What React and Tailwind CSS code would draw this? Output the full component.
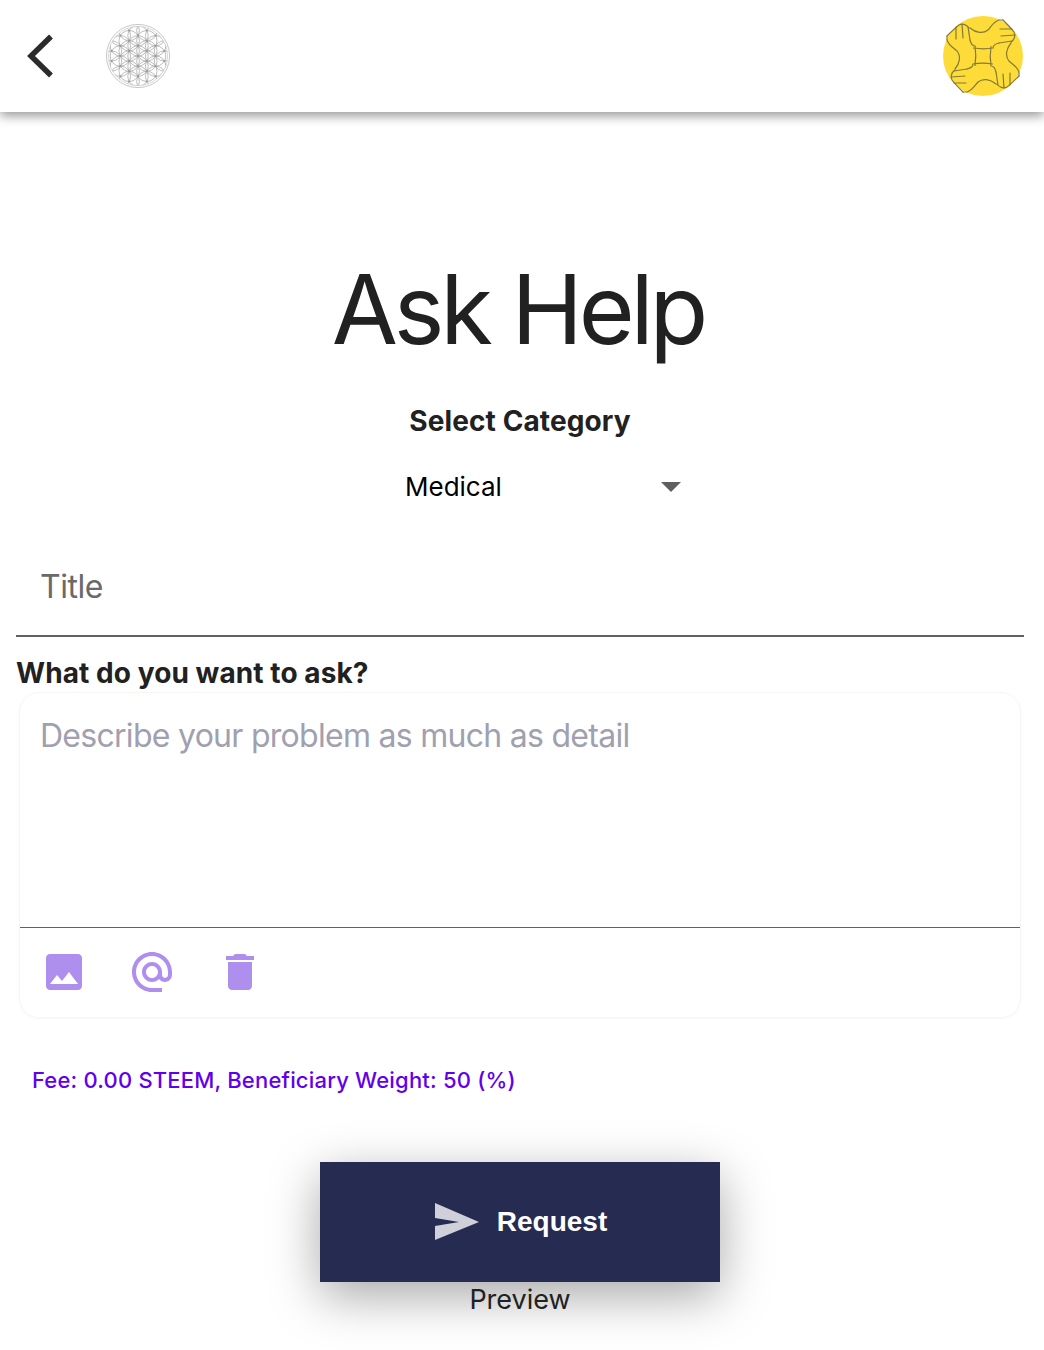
import React from "react";

const Flower = () => {
    // every lattice point gets a circle, the outer ring clips them
    const s = 10.2;
    const pts = [];
    for (let col = -4; col <= 4; col++) {
        for (let row = -4; row <= 4; row++) {
            const x = col * s * 0.866;
            const y = (row + (Math.abs(col) % 2 ? 0.5 : 0)) * s;
            if (Math.hypot(x, y) <= s * 2.9) pts.push([x, y]);
        }
    }
    return (
        <svg width="66" height="66" viewBox="-33 -33 66 66" fill="none" stroke="#a8a8a8" strokeWidth="0.75">
            <circle r="31.6" stroke="#c8c8c8" strokeWidth="1" />
            <circle r="29.6" stroke="#c8c8c8" strokeWidth="0.7" />
            <clipPath id="flower-clip">
                <circle r="29.6" />
            </clipPath>
            <g clipPath="url(#flower-clip)">
                {pts.map(([x, y], i) => (
                    <circle key={i} cx={x} cy={y} r={s} />
                ))}
                {pts.map(([x, y], i) => (
                    <circle key={"dot" + i} cx={x} cy={y} r="1.1" fill="#9a9a9a" stroke="none" />
                ))}
            </g>
        </svg>
    );
};

// one hand, repeated four times around the centre
const Hand = ({ angle }) => (
    <g transform={`rotate(${angle} 40 40)`}>
        <path d="M27 12 C33 17 40 18 45 14 C48 11 50 6 56 4 L60 4" />
        <path d="M60 4 C64 8 68 12 71 16 C73 20 71 24 68 26" />
        <path d="M57 13 L69 13 M58 20 L72 19 M56 27 L69 25" />
        <path d="M30.500 32 C37 33 44 33 50 32 C50 30 52 28 56 27" />
    </g>
);

const Hands = () => (
    <svg width="80" height="80" viewBox="0 0 80 80" fill="none" stroke="#857a34" strokeWidth="1.2" strokeLinecap="round">
        <circle cx="40" cy="40" r="40" fill="#fddc3a" stroke="none" />
        <Hand angle={0} />
        <Hand angle={90} />
        <Hand angle={180} />
        <Hand angle={270} />
    </svg>
);

const App = () => {
    return (
        <div className="w-[1044px] h-[1350px] overflow-hidden bg-white font-['Inter',sans-serif] text-[#212121]">
            {/* Header */}
            <div className="h-[112px] px-4 flex items-center justify-between shadow-[0_4px_10px_rgba(0,0,0,0.4)]">
                <div className="flex items-center">
                    <svg width="48" height="48" viewBox="0 0 48 48" fill="none">
                        <path d="M33 6.500 L15 24 L33 41.500" stroke="#2b2b2b" strokeWidth="5.500" strokeLinecap="square" />
                    </svg>
                    <div className="ml-[41px]">
                        <Flower />
                    </div>
                </div>
                <div className="mr-[5px]">
                    <Hands />
                </div>
            </div>

            <div className="pl-4 pr-5">
                <h1 className="mt-[140px] h-[115px] pr-[4px] text-center text-[96px] leading-[115px] font-[380] tracking-[-4.2px]">Ask Help</h1>
                <div className="mt-[34px] text-center text-[28px] leading-[40px] font-bold tracking-[0.1px]">Select Category</div>

                {/* Select */}
                <div className="mt-[26px] ml-[389px] w-[280px] flex items-center justify-between">
                    <span className="text-[26px] leading-[40px] text-black">Medical</span>
                    <span className="w-0 h-0 mr-[4px] border-x-[10px] border-x-transparent border-t-[10px] border-t-[#5f5f5f]" />
                </div>

                {/* Title */}
                <div className="mt-[26px] h-[104px] border-b-[2px] border-[#616161] px-[24px] pt-[31px] text-[32px] leading-[46px] tracking-[-0.5px] text-[#6a6a6a]">Title</div>

                <div className="mt-[17px] text-[28px] leading-[38px] font-bold tracking-[0.08px]">What do you want to ask?</div>

                {/* Editor */}
                <div className="mx-[3px] h-[326px] rounded-[20px] border border-[#f6f6f6] shadow-[0_1px_3px_rgba(0,0,0,0.03)] flex flex-col">
                    <div className="h-[235px] border-b border-[#616161] px-[20px] pt-[18px] text-[32px] leading-[50px] tracking-[-0.72px] text-[#a0a0b0]">Describe your problem as much as detail</div>
                    <div className="flex items-center h-[88px] pl-[20px] gap-[40px] text-[#ae8fee]">
                        <svg width="48" height="48" viewBox="0 0 24 24" fill="currentColor">
                            <path d="M21 19V5c0-1.100-.9-2-2-2H5c-1.100 0-2 .9-2 2v14c0 1.100.9 2 2 2h14c1.100 0 2-.9 2-2zM8.500 13.500l2.500 3.010L14.500 12l4.500 6H5l3.500-4.500z" />
                        </svg>
                        <svg width="48" height="48" viewBox="0 0 24 24" fill="currentColor">
                            <path d="M12 2C6.480 2 2 6.480 2 12s4.480 10 10 10h5v-2h-5c-4.340 0-8-3.660-8-8s3.660-8 8-8 8 3.660 8 8v1.430c0 .79-.71 1.570-1.500 1.570s-1.500-.78-1.500-1.570V12c0-2.760-2.240-5-5-5s-5 2.240-5 5 2.240 5 5 5c1.380 0 2.640-.56 3.540-1.470.65.89 1.770 1.470 2.960 1.470 1.970 0 3.500-1.600 3.500-3.570V12c0-5.520-4.480-10-10-10zm0 13c-1.660 0-3-1.340-3-3s1.340-3 3-3 3 1.340 3 3-1.340 3-3 3z" />
                        </svg>
                        <svg width="48" height="48" viewBox="0 0 24 24" fill="currentColor">
                            <path d="M6 19c0 1.100.9 2 2 2h8c1.100 0 2-.9 2-2V7H6v12zM19 4h-3.500l-1-1h-5l-1 1H5v2h14V4z" />
                        </svg>
                    </div>
                </div>

                <div className="mt-[44px] ml-[16px] text-[22px] leading-[36px] font-medium tracking-[0.19px] text-[#6200ee]">Fee: 0.00 STEEM, Beneficiary Weight: 50 (%)</div>

                {/* Actions */}
                <div className="mt-[64px] flex flex-col items-center">
                    <button className="w-[400px] h-[120px] bg-[#262b51] flex items-center justify-center gap-[16px] shadow-[0_14px_50px_rgba(0,0,0,0.35)]">
                        <svg width="48" height="40" viewBox="0 0 48 40" fill="#cfd0da">
                            <path d="M2 1 L46 20 L2 38 L2 24 L26 20 L2 16 Z" />
                        </svg>
                        <span className="font-['Liberation_Sans',sans-serif] text-[28px] font-bold text-white">Request</span>
                    </button>
                    <span className="relative mt-[1px] text-[27px] leading-[34px]">Preview</span>
                </div>
            </div>
        </div>
    );
};

export default App;
